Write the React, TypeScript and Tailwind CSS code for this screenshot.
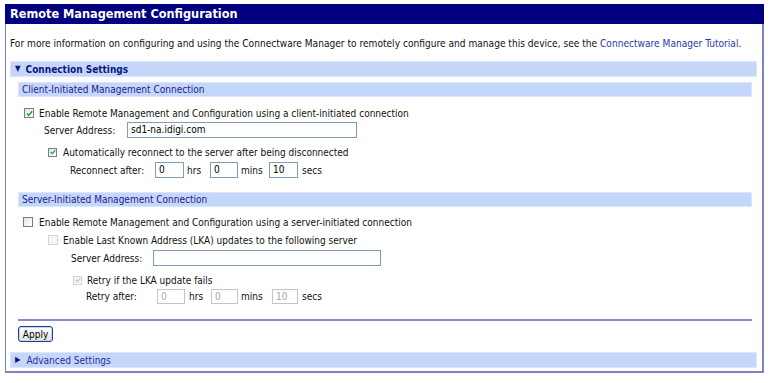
import React from "react";

const font = { fontFamily: '"DejaVu Sans Condensed","DejaVu Sans",Verdana,sans-serif' };

function Check({ checked, disabled, size = 10 }: { checked?: boolean; disabled?: boolean; size?: number }) {
  return (
    <span
      className={`inline-flex items-center justify-center shrink-0 border ${disabled ? "border-[#d2d2d2] bg-[#f6f6f6]" : "border-[#6f7f99] bg-gradient-to-br from-[#e4e4e4] to-white"}`}
      style={{ width: size, height: size }}
    >
      {checked && (
        <svg width={size - 3} height={size - 3} viewBox="0 0 8 8">
          <path d="M1 4 L3.2 6.2 L7 1.5" fill="none" stroke={disabled ? "#c4c4c4" : "#21a121"} strokeWidth="1.6" />
        </svg>
      )}
    </span>
  );
}

function Box({ value, w, disabled }: { value: string; w: string; disabled?: boolean }) {
  return (
    <div
      className={`${w} shrink-0 border ${disabled ? "border-[#c4c4c4] text-[#a8a8a8]" : "border-[#7f9db9] text-black"} bg-white text-[10px] leading-[13px] pl-[3px]`}
    >
      {value}
    </div>
  );
}

export default function App() {
  return (
    <div className="bg-white w-[775px] h-[383px] pt-[4px] pl-[5px] text-[10px] text-[#111]" style={font}>
      <div className="w-[759px] border-l border-r-2 border-b-2 border-[#7f80c6] flex flex-col pb-[3px]">
        <div className="h-[20px] bg-[#000080] text-white font-bold text-[12.6px] leading-[20px] pl-[5px] -ml-px -mr-[2px]">
          Remote Management Configuration
        </div>
        <div className="px-[4px]">
          <div className="h-[37px] flex items-center pt-[2px] text-[10.1px]">
            <span className="whitespace-nowrap">
              For more information on configuring and using the Connectware Manager to remotely configure and manage this device, see the{" "}
              <span className="text-[#2d3aa6]">Connectware Manager Tutorial</span>.
            </span>
          </div>
          <div className="h-[16px] bg-[#c5d6fb] border border-[#dbe5fd] flex items-center pl-[4px] font-bold text-[#0c1680] w-[747px]">
            <span className="text-[8px] mr-[5px]">▼</span>Connection Settings
          </div>
          <div className="pl-[8px] pt-[5px] w-[743px]">
            <div className="h-[15px] bg-[#c5d6fb] border border-[#dbe5fd] flex items-center pl-[3px] text-[#1a2090] w-[734px]">
              Client-Initiated Management Connection
            </div>
            <div className="h-[16px] mt-[8px] flex items-center pl-[6px]">
              <Check checked />
              <span className="ml-[5px]">Enable Remote Management and Configuration using a client-initiated connection</span>
            </div>
            <div className="flex items-center h-[16px] mt-[1px] ml-[26px]">
              <span className="w-[83px]">Server Address:</span>
              <Box value="sd1-na.idigi.com" w="w-[230px] h-[16px]" />
            </div>
            <div className="h-[16px] mt-[6px] flex items-center pl-[30px] text-[10px]">
              <Check checked size={9} />
              <span className="ml-[6px]">Automatically reconnect to the server after being disconnected</span>
            </div>
            <div className="flex items-center h-[16px] mt-[2px] ml-[52px]">
              <span className="w-[85px]">Reconnect after:</span>
              <Box value="0" w="w-[29px] h-[16px]" />
              <span className="ml-[3px] w-[23px]">hrs</span>
              <Box value="0" w="w-[28px] h-[16px]" />
              <span className="ml-[3px] w-[28px]">mins</span>
              <Box value="10" w="w-[29px] h-[16px]" />
              <span className="ml-[4px]">secs</span>
            </div>
            <div className="h-[15px] mt-[14px] bg-[#c5d6fb] border border-[#dbe5fd] flex items-center pl-[3px] text-[#1a2090] w-[734px]">
              Server-Initiated Management Connection
            </div>
            <div className="h-[16px] mt-[7px] flex items-center pl-[5px]">
              <Check />
              <span className="ml-[6px]">Enable Remote Management and Configuration using a server-initiated connection</span>
            </div>
            <div className="h-[16px] mt-[2px] flex items-center pl-[30px]">
              <Check disabled />
              <span className="ml-[5px]">Enable Last Known Address (LKA) updates to the following server</span>
            </div>
            <div className="flex items-center h-[16px] mt-[2px] ml-[53px]">
              <span className="w-[82px]">Server Address:</span>
              <Box value="" w="w-[228px] h-[16px]" />
            </div>
            <div className="h-[16px] mt-[6px] flex items-center pl-[55px] text-[10px]">
              <Check checked disabled size={9} />
              <span className="ml-[5px]">Retry if the LKA update fails</span>
            </div>
            <div className="flex items-center h-[15px] mt-[1px] ml-[68px]">
              <span className="w-[71px]">Retry after:</span>
              <Box value="0" w="w-[28px] h-[15px]" disabled />
              <span className="ml-[4px] w-[22px]">hrs</span>
              <Box value="0" w="w-[27px] h-[15px]" disabled />
              <span className="ml-[3px] w-[31px]">mins</span>
              <Box value="10" w="w-[26px] h-[15px]" disabled />
              <span className="ml-[4px]">secs</span>
            </div>
            <div className="h-[2px] mt-[15px] bg-[#8a8ad0] w-[734px]" />
            <button className="mt-[5px] h-[16px] w-[35px] border border-[#1b3f8f] rounded-[3px] bg-gradient-to-b from-white to-[#e4e4dc] text-[10px] leading-[13px] text-black shadow-[inset_0_0_0_1px_#c9d8f3]">
              Apply
            </button>
          </div>
          <div className="h-[16px] mt-[10px] bg-[#c5d6fb] border border-[#dbe5fd] flex items-center pl-[4px] text-[#24309a] w-[747px]">
            <span className="text-[8px] mr-[6px] text-[#0c1680]">▶</span>Advanced Settings
          </div>
        </div>
      </div>
    </div>
  );
}
